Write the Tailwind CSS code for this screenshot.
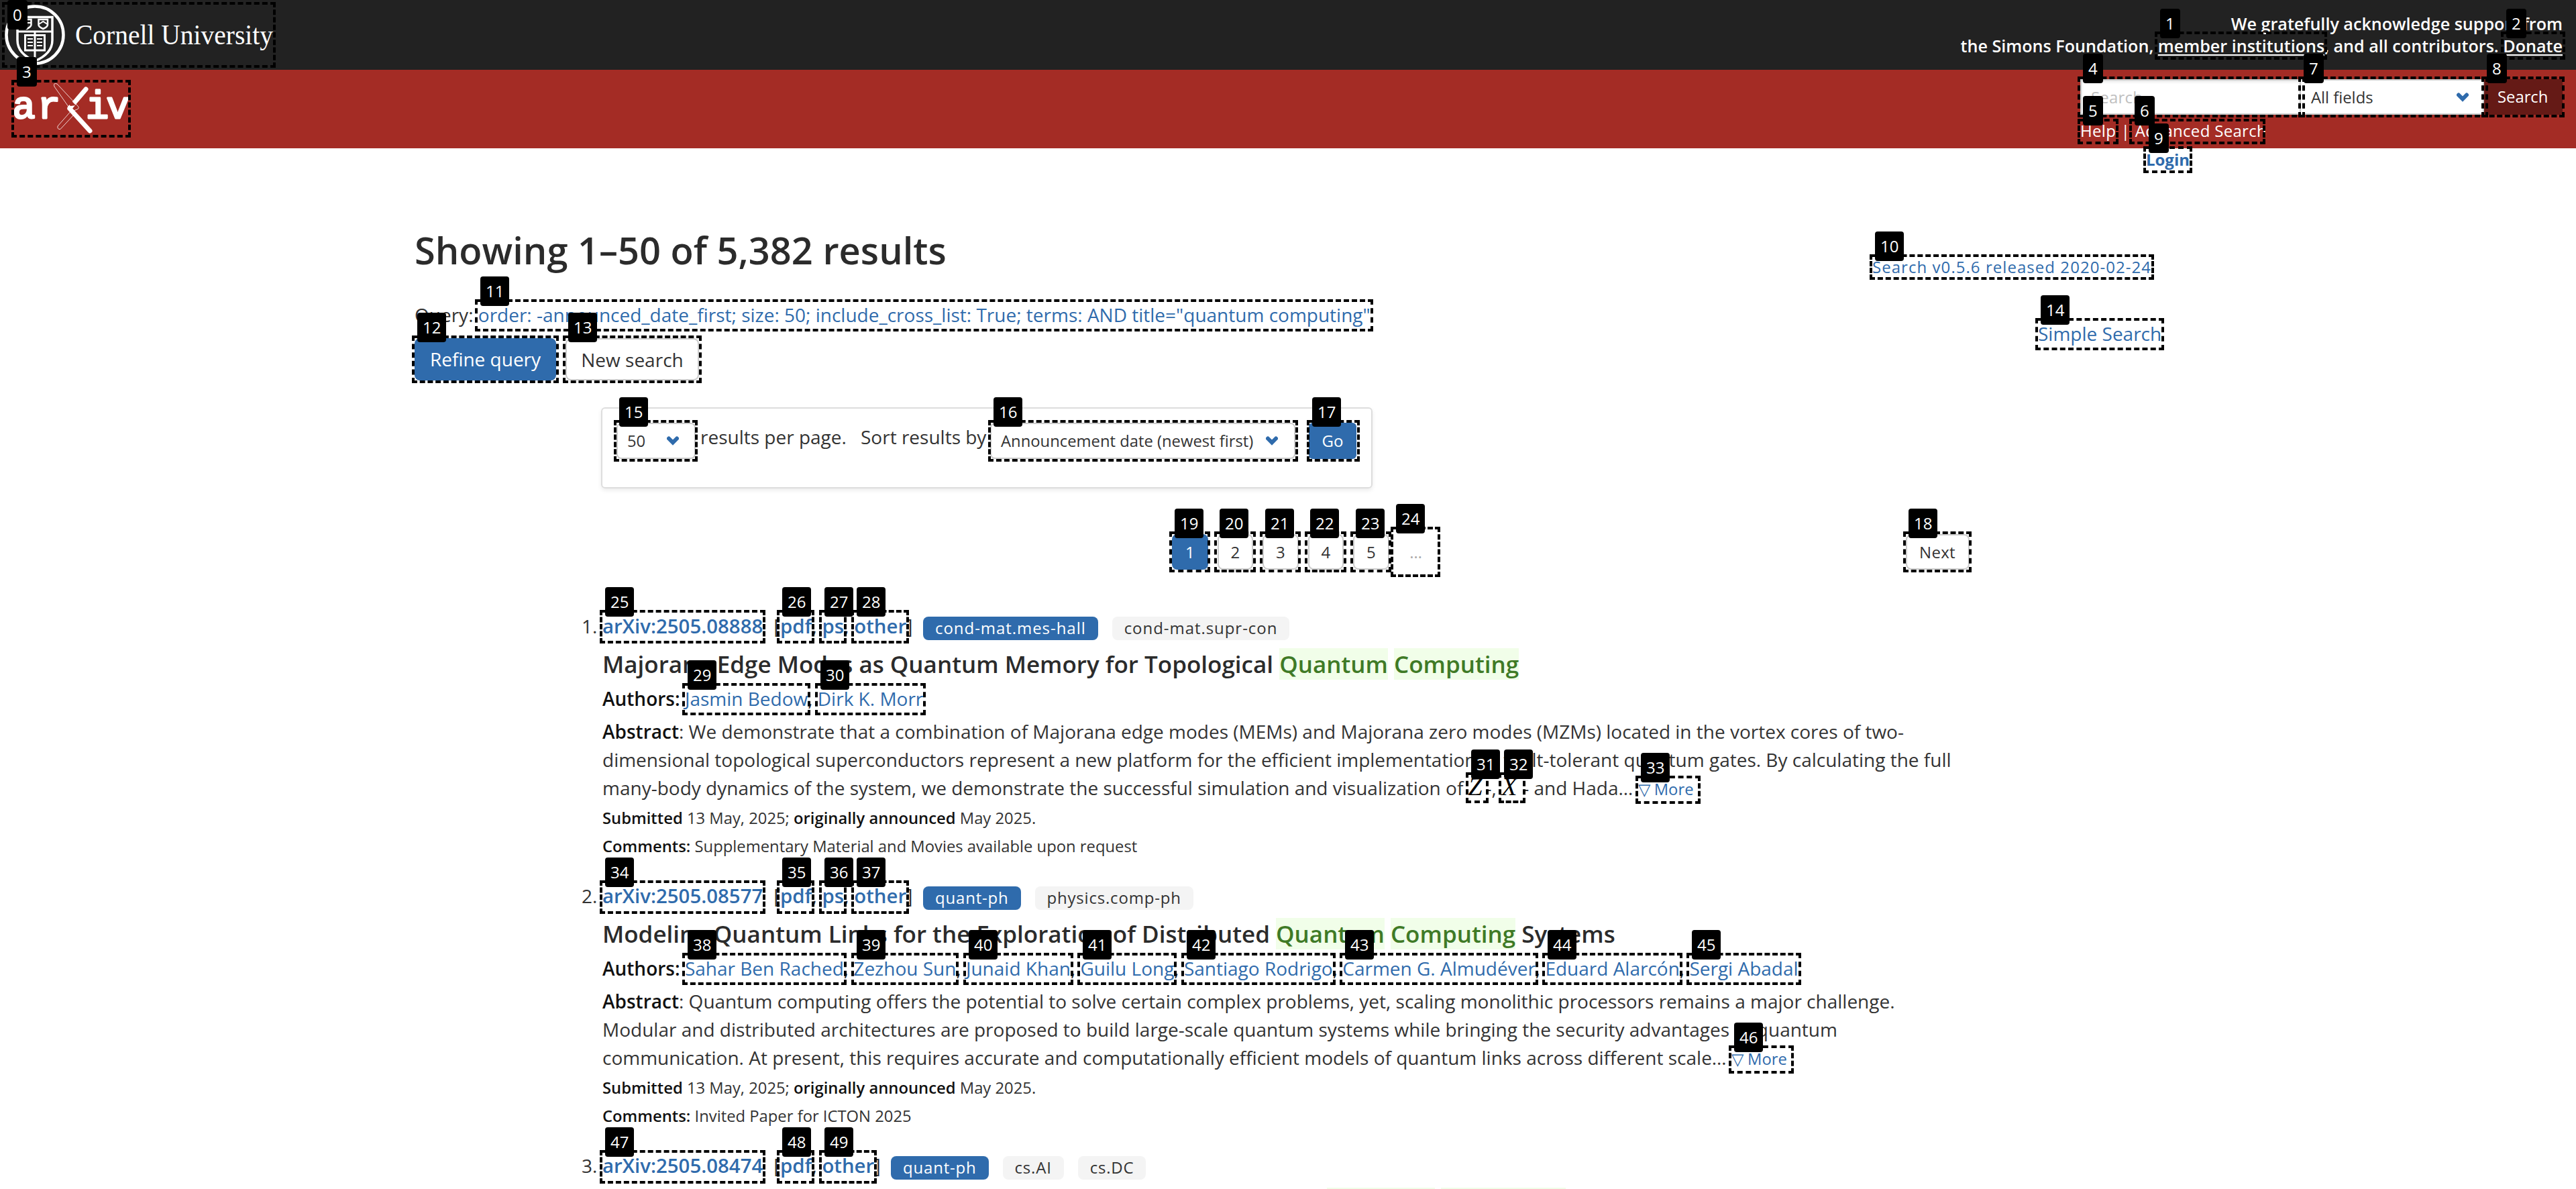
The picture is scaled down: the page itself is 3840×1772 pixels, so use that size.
<!DOCTYPE html>
<html lang="en">
<head>
<meta charset="utf-8">
<title>Search | arXiv e-print repository</title>
<script src="https://cdn.jsdelivr.net/npm/@tailwindcss/browser@4"></script>
</head>
<body class="relative h-[1772px] w-[3840px] overflow-hidden bg-white font-['Open_Sans',sans-serif] text-[28px] leading-[42px] text-[#333]">
<svg class="hidden"><symbol id="chev" viewBox="0 0 18 14"><path d="M3 3.500 9 9.500 15 3.500" fill="none" stroke="#2f6bac" stroke-width="6" stroke-linecap="round" stroke-linejoin="miter"/></symbol></svg>

<!-- University banner -->
<header class="flex h-[104px] justify-between bg-[#222] pr-5 pl-[7px] text-white">
  <svg class="h-[104px] w-[404px]" viewBox="7 0 404 104" fill="none" stroke="#fff">
    <circle cx="52" cy="52" r="42.5" stroke-width="4.5"/>
    <path d="M26 25.500H78V60Q78 80 52 91Q26 80 26 60Z" stroke-width="3.500"/>
    <path d="M26 47H78M52 47V91" stroke-width="3"/>
    <path d="M57.500 29H71V37Q71 40 64.300 43Q57.500 40 57.500 37ZM33 29H46.500V37Q46.500 40 39.800 43Q33 40 33 37Z" stroke-width="2.500"/>
    <path d="M58 36 64.300 32 70.500 36M34 34H46" stroke-width="2"/>
    <path d="M37.500 52.500H66.500V75H37.500Z" stroke-width="3"/>
    <path d="M41 58H49M41 63H49M41 68H49M55 58H63M55 63H63M55 68H63" stroke-width="1.800"/>
    <text x="112" y="66" fill="#fff" stroke="none" font-family="Liberation Serif" font-size="42" textLength="295" lengthAdjust="spacingAndGlyphs">Cornell University</text>
  </svg>
  <p class="pt-[19px] text-right text-[25.140px] leading-[33px] font-semibold">We gratefully acknowledge support from<br>the Simons Foundation, <a class="underline decoration-2 underline-offset-[3px]">member institutions</a>, and all contributors. <a class="underline decoration-2 underline-offset-[3px]">Donate</a></p>
</header>

<!-- Brand bar -->
<div class="flex h-[117px] justify-between bg-[#a42c25] pr-[20px] pl-[21px] text-[24px] text-white">
  <svg class="mt-[19px] h-[78px] w-[170px]" viewBox="21 123 170 78">
    <g fill="#fff" stroke="#fff" stroke-width="2.800" stroke-linejoin="round" font-family="Liberation Mono" font-size="57"><text x="18.500 56" y="175.500">ar</text><text x="128 158.500" y="175.500">iv</text></g>
    <path d="M128 133 104 161" stroke="#fff" stroke-width="7" stroke-linecap="round"/>
    <path d="M104 162 134 195" stroke="#fff" stroke-width="7" stroke-linecap="round"/>
    <path d="M108 163 86 188Q85 193 90 192.500L111 170" fill="none" stroke="#fff" stroke-width=".8"/>
    <path d="M85 125 116 158Q119 161 115 163L107 166 81 129Q79 123 85 125Z" fill="none" stroke="#fff" stroke-width=".8"/>
    <path d="M84 126 113 157 105 158 82 129Z" fill="#a42c25"/>
  </svg>
  <div class="pt-[14px]">
    <div class="flex h-[53px]">
      <div class="w-[329px] border-2 border-[#ccc] bg-white pl-[14px] leading-[49px] tracking-[.2px] text-[#c0c0c0] shadow-[inset_0_2px_4px_#0000001a]">Search</div>
      <div class="flex w-[273px] items-center justify-between border-2 border-l-0 border-[#ccc] bg-white pr-[21px] pl-[15px] text-[23.800px] text-[#333]"><span>All fields</span><svg class="h-[14px] w-[18px]"><use href="#chev"/></svg></div>
      <div class="w-[117px] rounded-r-[4px] bg-[#651a16] pl-[20px] text-[23.800px] leading-[53px]">Search</div>
    </div>
    <div class="mt-[5px] h-[38px] leading-[38px] tracking-[.3px]">Help <span class="px-[1px]">|</span> Advanced Search</div>
  </div>
</div>
<div class="flex h-[34px] justify-end pr-[576px] text-[24px] leading-[34px] font-bold text-[#2f6bac]">Login</div>

<!-- Results heading -->
<main class="pt-[82px] pl-[618px]">
  <div class="flex h-[111px] w-[2608px] justify-between">
    <h1 class="text-[56px] leading-[70px] font-semibold text-[#2b2b2b]">Showing 1–50 of 5,382 results</h1>
    <div class="w-[435px] pt-[43px] text-[#2f6bac]">
      <div class="h-[36px] text-[24px] leading-[36px] tracking-[1.050px]">Search v0.5.6 released 2020-02-24</div>
      <div class="mt-[60px] pl-[247px] whitespace-nowrap">Simple Search</div>
    </div>
  </div>
  <div class="h-[42px]">Query: <a class="text-[#2f6bac]">order: -announced_date_first; size: 50; include_cross_list: True; terms: AND title="quantum computing"</a></div>
  <div class="mt-[14px] flex gap-[14px] text-center leading-[63px]">
    <div class="h-[63px] w-[211px] rounded-[8px] bg-[#2f6bac] text-white">Refine query</div>
    <div class="h-[63px] w-[199px] rounded-[8px] border-2 border-[#ccc] leading-[60px]">New search</div>
  </div>

  <!-- Sort form -->
  <div class="mt-[40px] ml-[278px] flex h-[121px] w-[1150px] rounded-[6px] border-2 border-[#ddd] px-[21px] pt-[21px] shadow-[0_3px_6px_#00000014]">
    <div class="flex h-[54px] w-[118px] items-center justify-between rounded-[7px] border-2 border-[#ccc] pr-[23px] pl-[14px] text-[23.800px]"><span>50</span><svg class="h-[14px] w-[18px]"><use href="#chev"/></svg></div>
    <div class="ml-[7px] w-[239px] leading-[43px]">results per page.</div>
    <div class="w-[193px] leading-[43px]">Sort results by</div>
    <div class="flex h-[54px] w-[455px] items-center justify-between rounded-[7px] border-2 border-[#ccc] pr-[24px] pl-[14px] text-[23.800px]"><span>Announcement date (newest first)</span><svg class="h-[14px] w-[18px]"><use href="#chev"/></svg></div>
    <div class="ml-[20px] h-[54px] w-[71px] rounded-[6px] bg-[#2f6bac] text-center text-[24px] leading-[54px] text-white">Go</div>
  </div>

  <!-- Pagination -->
  <nav class="mt-[68px] ml-[1129px] flex h-[53px] gap-[14px] text-center text-[24px] leading-[49px]">
    <span class="w-[53.500px] rounded-[8px] bg-[#2f6bac] leading-[53px] text-white">1</span>
    <span class="w-[53.500px] rounded-[8px] border-2 border-[#ccc]">2</span>
    <span class="w-[53.500px] rounded-[8px] border-2 border-[#ccc]">3</span>
    <span class="w-[53.500px] rounded-[8px] border-2 border-[#ccc]">4</span>
    <span class="w-[53.500px] rounded-[8px] border-2 border-[#ccc]">5</span>
    <span class="-ml-[7px] w-[66px] leading-[53px] text-[#aaa]">…</span>
    <span class="ml-[683px] w-[95px] rounded-[8px] border-2 border-[#ccc] tracking-[.3px]">Next</span>
  </nav>

  <!-- Results -->
  <ol class="mt-[63px] ml-[249px] w-[2050px]">
    <li class="flex h-[402px]">
      <span class="w-[31px]">1.</span>
      <div>
        <div class="flex h-[42px] items-end">
          <p class="w-[478px] whitespace-nowrap text-[29.400px] font-semibold text-[#2f6bac]">arXiv:2505.08888<span class="ml-[16px] font-normal text-[#333]">[</span>pdf<span class="font-normal text-[#333]">, </span>ps<span class="font-normal text-[#333]">, </span>other<span class="font-normal text-[#333]">]</span></p>
          <span class="h-[35px] rounded-[8px] bg-[#2f6bac] px-[18px] text-[24px] leading-[33px] tracking-[.95px] text-white">cond-mat.mes-hall</span>
          <span class="ml-[21px] h-[35px] rounded-[8px] bg-[#f4f4f4] px-[18px] text-[24px] leading-[33px] tracking-[.95px]">cond-mat.supr-con</span>
        </div>
        <h2 class="mt-[12px] h-[48px] text-[35px] leading-[47px] font-semibold text-[#2b2b2b]">Majorana Edge Modes as Quantum Memory for Topological <mark class="bg-[#f1fee9] text-[#3f7a26]">Quantum</mark> <mark class="bg-[#f1fee9] text-[#3f7a26]">Computing</mark></h2>
        <p class="mt-[6px] h-[42px]"><b class="font-semibold text-[#111]">Authors:</b> <a class="text-[#2f6bac]">Jasmin Bedow</a>, <a class="text-[#2f6bac]">Dirk K. Morr</a></p>
        <p class="mt-[7px] h-[126px] whitespace-nowrap"><b class="font-semibold text-[#111]">Abstract</b>: We demonstrate that a combination of Majorana edge modes (MEMs) and Majorana zero modes (MZMs) located in the vortex cores of two-<br>dimensional topological superconductors represent a new platform for the efficient implementation of fault-tolerant quantum gates. By calculating the full<br>many-body dynamics of the system, we demonstrate the successful simulation and visualization of <i class="inline-block w-[26px] font-['Liberation_Serif'] text-[38px] leading-none text-black">Z</i>-, <i class="inline-block w-[32px] font-['Liberation_Serif'] text-[38px] leading-none text-black">X</i>- and Hada… <a class="text-[23.800px] text-[#2f6bac]">▽ More</a></p>
        <p class="mt-[3px] h-[42px] text-[23.800px]"><b class="font-semibold text-[#111]">Submitted</b> 13 May, 2025; <b class="font-semibold text-[#111]">originally announced</b> May 2025.</p>
        <p class="h-[42px] text-[23.800px]"><b class="font-semibold text-[#111]">Comments:</b> Supplementary Material and Movies available upon request</p>
      </div>
    </li>
    <li class="flex h-[402px]">
      <span class="w-[31px]">2.</span>
      <div>
        <div class="flex h-[42px] items-end">
          <p class="w-[478px] whitespace-nowrap text-[29.400px] font-semibold text-[#2f6bac]">arXiv:2505.08577<span class="ml-[16px] font-normal text-[#333]">[</span>pdf<span class="font-normal text-[#333]">, </span>ps<span class="font-normal text-[#333]">, </span>other<span class="font-normal text-[#333]">]</span></p>
          <span class="h-[35px] rounded-[8px] bg-[#2f6bac] px-[18px] text-[24px] leading-[33px] tracking-[.8px] text-white">quant-ph</span>
          <span class="ml-[21px] h-[35px] rounded-[8px] bg-[#f4f4f4] px-[18px] text-[24px] leading-[33px] tracking-[.8px]">physics.comp-ph</span>
        </div>
        <h2 class="mt-[12px] h-[48px] text-[35px] leading-[47px] font-semibold text-[#2b2b2b]">Modeling Quantum Links for the Exploration of Distributed <mark class="bg-[#f1fee9] text-[#3f7a26]">Quantum</mark> <mark class="bg-[#f1fee9] text-[#3f7a26]">Computing</mark> Systems</h2>
        <p class="mt-[6px] h-[42px]"><b class="font-semibold text-[#111]">Authors:</b> <a class="text-[#2f6bac]">Sahar Ben Rached</a>, <a class="text-[#2f6bac]">Zezhou Sun</a>, <a class="text-[#2f6bac]">Junaid Khan</a>, <a class="text-[#2f6bac]">Guilu Long</a>, <a class="text-[#2f6bac]">Santiago Rodrigo</a>, <a class="text-[#2f6bac]">Carmen G. Almudéver</a>, <a class="text-[#2f6bac]">Eduard Alarcón</a>, <a class="text-[#2f6bac]">Sergi Abadal</a></p>
        <p class="mt-[7px] h-[126px] whitespace-nowrap"><b class="font-semibold text-[#111]">Abstract</b>: Quantum computing offers the potential to solve certain complex problems, yet, scaling monolithic processors remains a major challenge.<br>Modular and distributed architectures are proposed to build large-scale quantum systems while bringing the security advantages of quantum<br>communication. At present, this requires accurate and computationally efficient models of quantum links across different scale… <a class="text-[23.800px] text-[#2f6bac]">▽ More</a></p>
        <p class="mt-[3px] h-[42px] text-[23.800px]"><b class="font-semibold text-[#111]">Submitted</b> 13 May, 2025; <b class="font-semibold text-[#111]">originally announced</b> May 2025.</p>
        <p class="h-[42px] text-[23.800px]"><b class="font-semibold text-[#111]">Comments:</b> Invited Paper for ICTON 2025</p>
      </div>
    </li>
    <li class="flex h-[56px] overflow-hidden">
      <span class="w-[31px]">3.</span>
      <div>
        <div class="flex h-[42px] items-end">
          <p class="w-[430px] whitespace-nowrap text-[29.400px] font-semibold text-[#2f6bac]">arXiv:2505.08474<span class="ml-[16px] font-normal text-[#333]">[</span>pdf<span class="font-normal text-[#333]">, </span>other<span class="font-normal text-[#333]">]</span></p>
          <span class="h-[35px] rounded-[8px] bg-[#2f6bac] px-[18px] text-[24px] leading-[33px] tracking-[.8px] text-white">quant-ph</span>
          <span class="ml-[21px] h-[35px] rounded-[8px] bg-[#f4f4f4] px-[18px] text-[24px] leading-[33px] tracking-[.8px]">cs.AI</span>
          <span class="ml-[21px] h-[35px] rounded-[8px] bg-[#f4f4f4] px-[18px] text-[24px] leading-[33px] tracking-[.8px]">cs.DC</span>
        </div>
        <!-- top edge of the highlighted words in the next title -->
        <div class="mt-[12px] ml-[1080px] flex h-[2px] gap-[9px]"><span class="w-[161px] bg-[#f1fee9]"></span><span class="w-[186px] bg-[#f1fee9]"></span></div>
      </div>
    </li>
  </ol>
</main>

<!-- Numbered markers over the interactive elements -->
<div id="marks"></div>
<script>
// left, top, right, bottom of every marked element
const boxes = [
[3,3,411,101],[3212,47,3469,89],[3728,47,3824,89],[17,119,195,205],[3097,114,3436,175],[3097,177,3158,215],[3174,177,3377,215],[3426,114,3709,175],[3699,114,3823,175],[3195,218,3268,258],
[2787,379,3211,417],[708,446,2047,494],[614,500,833,571],[839,500,1046,571],[3034,474,3226,522],[915,626,1040,688],[1473,626,1935,688],[1948,626,2027,688],[2837,792,2939,853],[1743,792,1804,853],
[1810,792,1872,853],[1878,792,1939,853],[1945,792,2007,853],[2013,792,2074,853],[2073,785,2147,860],[894,909,1141,959],[1158,909,1214,959],[1221,909,1262,959],[1269,909,1355,959],[1017,1018,1208,1066],
[1215,1018,1380,1066],[2185,1151,2219,1197],[2234,1151,2274,1197],[2438,1156,2535,1198],[894,1312,1141,1362],[1158,1312,1214,1362],[1221,1312,1262,1362],[1269,1312,1355,1362],[1017,1420,1262,1468],[1269,1420,1429,1468],
[1436,1420,1600,1468],[1606,1420,1754,1468],[1761,1420,1991,1468],[1997,1420,2293,1468],[2299,1420,2508,1468],[2514,1420,2685,1468],[2577,1558,2674,1600],[894,1714,1141,1764],[1158,1714,1214,1764],[1221,1714,1307,1764]];
document.getElementById('marks').innerHTML = boxes.map(([l,t,r,b]) =>
  `<div class="absolute border-4 border-dashed border-black" style="left:${l}px;top:${t}px;width:${r-l}px;height:${b-t}px"></div>`).join('') +
  boxes.map(([l,t],i) => `<div class="absolute h-[44px] rounded-[4px] bg-black px-[8px] text-[24px] leading-[44px] text-white" style="left:${l+8}px;top:${Math.max(0,t-34)}px">${i}</div>`).join('');
</script>
</body>
</html>
